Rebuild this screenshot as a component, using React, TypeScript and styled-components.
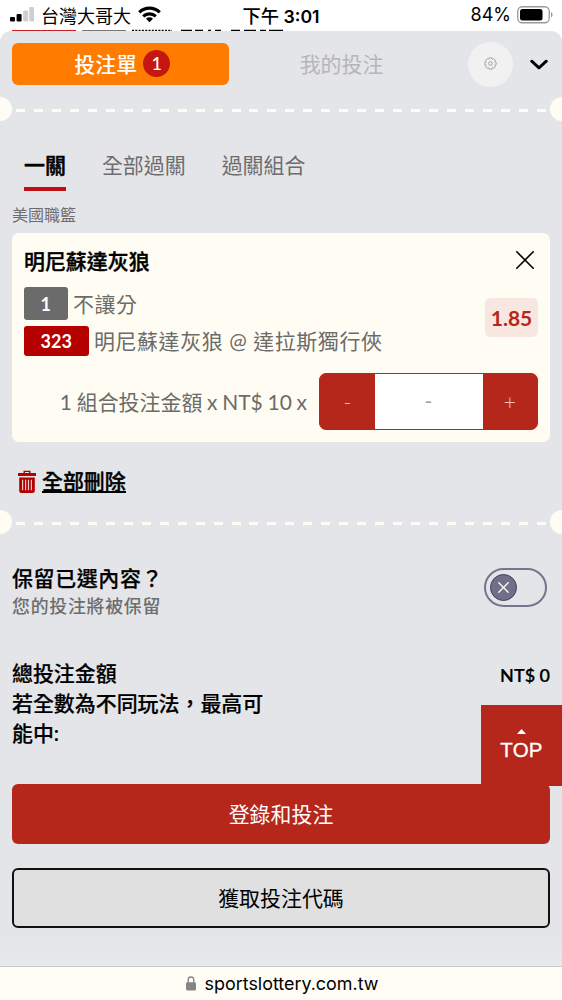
import React from 'react';
import styled, { createGlobalStyle } from 'styled-components';

const GlobalStyle = createGlobalStyle`
  * { box-sizing: border-box; }
  body { margin: 0; background: #fff; }
  button { font: inherit; color: inherit; margin: 0; padding: 0; border: 0; background: none; }
  svg { display: block; flex: none; }
`;

const Screen = styled.div`
  width: 562px;
  height: 1000px;
  display: flex;
  flex-direction: column;
  overflow: hidden;
  position: relative;
  background: #fff;
  font-family: Lato, "Noto Sans CJK TC", sans-serif;
  font-size: 20.95px;
  color: #000;
  white-space: nowrap;
`;

const StatusBar = styled.header`
  height: 31px;
  display: grid;
  grid-template-columns: 1fr auto 1fr;
  align-items: center;
  padding: 0 9px 2px 10px;
  position: relative;
  font-family: Inter, "Noto Sans CJK TC", sans-serif;
  font-size: 18px;
`;

const StatusGroup = styled.div<{ $end?: boolean }>`
  display: flex;
  align-items: center;
  gap: ${p => (p.$end ? '6px' : '7px')};
  justify-content: ${p => (p.$end ? 'flex-end' : 'flex-start')};
`;

const Clock = styled.div`
  font-weight: 600;
  font-size: 17.7px;
  padding-right: 1px;
`;

const ClockPeriod = styled.span`
  font-weight: 500;
  font-size: 18.3px;
`;

const PagePeek = styled.svg`
  position: absolute;
  left: 0;
  top: 29px;
`;

const Sheet = styled.main`
  height: 935px;
  background: linear-gradient(#e4e5e8 97%, #e8e9ec);
  border-radius: 11px 11px 0 0;
  display: flex;
  flex-direction: column;
  position: relative;
`;

const SheetHead = styled.div`
  height: 66px;
  padding: 0 14px 0 12px;
  display: flex;
  align-items: center;
`;

const SlipTab = styled.button`
  width: 216.5px;
  height: 42px;
  border-radius: 6px;
  background: #ff7c00;
  color: #fff;
  font-weight: 500;
  display: flex;
  align-items: center;
  justify-content: center;
  gap: 6px;
  padding: 0 0 2px 4px;
`;

const Count = styled.span`
  width: 27px;
  height: 27px;
  margin-top: 1px;
  border-radius: 50%;
  background: #c4170f;
  font-size: 18px;
  line-height: 27px;
  text-align: center;
`;

const MyBets = styled.button`
  width: 226px;
  padding-bottom: 2px;
  color: #b5b6b9;
`;

const GearButton = styled.button`
  width: 45px;
  height: 45px;
  margin: 0 17px 0 13.5px;
  border-radius: 50%;
  background: #f1f1f2;
  display: flex;
  align-items: center;
  justify-content: center;
  padding-bottom: 2px;
`;

const Perforation = styled.div`
  height: 24px;
  display: flex;
  align-items: center;
  justify-content: space-between;
  overflow: hidden;
`;

const Notch = styled.span<{ $right?: boolean }>`
  width: 12px;
  height: 24px;
  flex: none;
  background: #fffdf3;
  border-radius: ${p => (p.$right ? '12px 0 0 12px' : '0 12px 12px 0')};
`;

const Dashes = styled.span`
  width: 531px;
  height: 3px;
  margin-top: 3px;
  background: repeating-linear-gradient(90deg, #fffdf3 0 9px, transparent 9px 17.96px);
`;

const Tabs = styled.nav`
  display: flex;
  gap: 36px;
  height: 70px;
  padding: 22px 24px 0;
`;

const Tab = styled.button<{ $active?: boolean }>`
  height: 48px;
  line-height: 44px;
  padding-bottom: 3px;
  color: ${p => (p.$active ? '#000' : '#6d6d6f')};
  font-weight: ${p => (p.$active ? 500 : 400)};
  -webkit-text-stroke: ${p => (p.$active ? '0.5px' : '0')};
  border-bottom: 4px solid ${p => (p.$active ? '#be0f14' : 'transparent')};
`;

const League = styled.div`
  height: 42px;
  padding: 11px 12px 0;
  font-size: 16px;
  line-height: 25px;
  color: #6d6d6f;
`;

const BetCard = styled.article`
  height: 209px;
  margin: 0 12px;
  padding: 12px;
  border-radius: 7px;
  background: #fffdf3;
  color: #6b6b69;
`;

const CardTitle = styled.div`
  height: 30px;
  display: flex;
  align-items: center;
  justify-content: space-between;
  padding-right: 4px;
  color: #000;
  font-weight: 500;
  -webkit-text-stroke: 0.4px;
`;

const TitleText = styled.span`
  padding-bottom: 1px;
`;

const BetInfo = styled.div`
  display: flex;
  justify-content: space-between;
  align-items: flex-start;
  margin-top: 12px;
  height: 70px;
`;

const BetLines = styled.div`
  display: flex;
  flex-direction: column;
  gap: 6px;
  letter-spacing: 0.6px;
`;

const BetLine = styled.div<{ $h: number }>`
  display: flex;
  height: ${p => p.$h}px;
  align-items: center;
  gap: 5.5px;
`;

const BetName = styled.span`
  padding-bottom: 2px;
`;

const Tag = styled.span<{ $w: number; $red?: boolean }>`
  width: ${p => p.$w}px;
  height: 100%;
  display: flex;
  align-items: center;
  justify-content: center;
  border-radius: 3px;
  background: ${p => (p.$red ? '#b50000' : '#6b6b6b')};
  color: #fff;
  font-size: 18px;
  font-weight: 700;
  letter-spacing: 0;
`;

const Odds = styled.div`
  width: 53px;
  height: 39px;
  margin-top: 11px;
  border-radius: 5px;
  background: #f8e7e0;
  color: #b5261b;
  font-size: 21px;
  font-weight: 700;
  line-height: 39px;
  text-align: center;
`;

const StakeRow = styled.div`
  display: flex;
  justify-content: flex-end;
  align-items: center;
  gap: 12px;
  margin-top: 16px;
  height: 57px;
`;

const StakeLabel = styled.span`
  padding-bottom: 2px;
  word-spacing: -0.6px;
`;

const Stepper = styled.div`
  width: 219px;
  height: 57px;
  display: flex;
  border: 1.5px solid #b5261b;
  border-radius: 7px;
  background: #b5261b;
  overflow: hidden;
  line-height: 54px;
  text-align: center;
`;

const StepButton = styled.button`
  flex: 1;
  color: #f1c9c2;
  font-weight: 300;
`;

const StakeField = styled.div`
  width: 108px;
  background: #fff;
  color: #a0a0a0;
`;

const DeleteAll = styled.button`
  height: 68px;
  padding: 11px 18px 0;
  display: flex;
  align-items: center;
  gap: 6px;
  font-weight: 500;
  -webkit-text-stroke: 0.4px;
`;

const DeleteLabel = styled.span`
  line-height: 20px;
  border-bottom: 2px solid #000;
`;

const KeepRow = styled.section`
  height: 82px;
  margin-top: 29px;
  padding: 0 15px 0 12px;
  display: flex;
  justify-content: space-between;
`;

const KeepTitle = styled.div`
  line-height: 30px;
  font-weight: 500;
  letter-spacing: 0.65px;
  -webkit-text-stroke: 0.25px;
`;

const KeepNote = styled.div`
  line-height: 27px;
  font-size: 17.9px;
  font-weight: 500;
  letter-spacing: 0.75px;
  color: #6d6d6f;
`;

const Toggle = styled.button`
  width: 63px;
  height: 39px;
  margin-top: 5px;
  padding-left: 4px;
  border: 2px solid #77748f;
  border-radius: 20px;
  display: flex;
  align-items: center;
`;

const Knob = styled.span`
  width: 27px;
  height: 27px;
  border-radius: 50%;
  border: 1.5px solid #403d66;
  background: #706f89;
  display: flex;
  align-items: center;
  justify-content: center;
`;

const Totals = styled.section`
  height: 139px;
  padding: 13px 12px 0;
  display: flex;
  justify-content: space-between;
  font-weight: 500;
  line-height: 30px;
  -webkit-text-stroke: 0.2px;
`;

const TotalLabel = styled.div`
  width: 262px;
  white-space: normal;
`;

const TotalValue = styled.div`
  font-size: 18px;
  font-weight: 600;
  padding-top: 2px;
`;

const Action = styled.button<{ $outline?: boolean }>`
  height: 60px;
  margin: 0 12px 24px;
  padding-bottom: 2px;
  border-radius: 6px;
  border: ${p => (p.$outline ? '2px solid #111' : '0')};
  background: ${p => (p.$outline ? '#e0e0e0' : '#b5261b')};
  color: ${p => (p.$outline ? '#000' : '#fff')};
`;

const TopButton = styled.button`
  position: absolute;
  right: 0;
  top: 705px;
  width: 81px;
  height: 81px;
  padding-top: 24px;
  background: #b5261b;
  color: #fff;
  font: 20.5px/26px "Liberation Sans", sans-serif;
  letter-spacing: 0.2px;
  -webkit-text-stroke: 0.3px;
  display: flex;
  flex-direction: column;
  align-items: center;
  gap: 3px;
`;

const AddressBar = styled.footer`
  height: 34px;
  border-top: 1px solid #c9c9c9;
  background: #fffdf6;
  display: flex;
  align-items: center;
  justify-content: center;
  gap: 9px;
  padding-left: 2px;
  font: 17.9px Inter, sans-serif;
`;

function Separator() {
  return (
    <Perforation>
      <Notch />
      <Dashes />
      <Notch $right />
    </Perforation>
  );
}

export default function App() {
  return (
    <Screen>
      <GlobalStyle />
      <StatusBar>
        <StatusGroup>
          <svg width="24" height="15" viewBox="0 0 24 15">
            <rect x="0" y="10" width="5" height="4.5" rx="1" />
            <rect x="6.6" y="7" width="5" height="7.5" rx="1" />
            <rect x="13.2" y="3.5" width="5" height="11" rx="1" fill="#cfcfcf" />
            <rect x="19.3" y="0" width="4.7" height="14.5" rx="1" fill="#cfcfcf" />
          </svg>
          <span>台灣大哥大</span>
          <svg width="23" height="17" viewBox="0 0 23 17" fill="none" stroke="#000" strokeWidth="3.2">
            <path d="M1.3 6.3a14.5 14.5 0 0 1 20.4 0" />
            <path d="M5.2 10.4a9 9 0 0 1 12.6 0" />
            <path d="M11.5 16.2 8 12.7a5 5 0 0 1 7 0z" fill="#000" stroke="none" />
          </svg>
        </StatusGroup>
        <Clock><ClockPeriod>下午</ClockPeriod> 3:01</Clock>
        <StatusGroup $end>
          <span>84%</span>
          <svg width="36" height="18" viewBox="0 0 36 18">
            <rect x=".75" y=".75" width="31.5" height="16" rx="4.5" fill="#fff" stroke="#999" strokeWidth="1.3" />
            <rect x="3" y="3" width="22.5" height="11.5" rx="2.5" />
            <path d="M34 6v5.5q1.6-.8 1.6-2.75T34 6z" fill="#999" />
          </svg>
        </StatusGroup>
        <PagePeek width="300" height="3" viewBox="0 0 300 3">
          <path d="M12 1.7h64" stroke="#c4202a" strokeWidth="1.3" />
          <path d="M82 1.7h44" stroke="#777" strokeWidth="1.3" />
          <path d="M132 1.5h40" stroke="#000" strokeWidth="1.6" strokeDasharray="2 1.3" />
          <path d="M181 1.5h11m3 0h8m5 0h3m4 0h6m10 0h9m4 0h12m4 0h6m3 0h14" stroke="#000" strokeWidth="1.5" />
        </PagePeek>
      </StatusBar>

      <Sheet>
        <SheetHead>
          <SlipTab>投注單<Count>1</Count></SlipTab>
          <MyBets>我的投注</MyBets>
          <GearButton aria-label="設定">
            <svg width="13" height="13" viewBox="0 0 13 13" fill="none" stroke="#a3a3a3">
              <path d="M5.3.8h2.4l.5 1.4 1.5-.6 1.7 1.7-.6 1.5 1.4.5v2.4l-1.4.5.6 1.5-1.7 1.7-1.5-.6-.5 1.4H5.3l-.5-1.4-1.5.6-1.7-1.7.6-1.5-1.4-.5V5.3l1.4-.5-.6-1.5 1.7-1.7 1.5.6z" strokeLinejoin="round" />
              <circle cx="6.5" cy="6.5" r="1.8" />
            </svg>
          </GearButton>
          <svg width="18" height="12" viewBox="0 0 18 12" fill="none" stroke="#000" strokeWidth="2.9" strokeLinecap="round" strokeLinejoin="round">
            <path d="M1.7 3.2 9 9.8l7.3-6.6" />
          </svg>
        </SheetHead>
        <Separator />

        <Tabs>
          <Tab $active>一關</Tab>
          <Tab>全部過關</Tab>
          <Tab>過關組合</Tab>
        </Tabs>
        <League>美國職籃</League>

        <BetCard>
          <CardTitle>
            <TitleText>明尼蘇達灰狼</TitleText>
            <svg width="18" height="18" viewBox="0 0 18 18" stroke="#000" strokeWidth="1.6" strokeLinecap="round">
              <path d="m.8.8 16.4 16.4m0-16.4L.8 17.2" />
            </svg>
          </CardTitle>
          <BetInfo>
            <BetLines>
              <BetLine $h={33}><Tag $w={43.5}>1</Tag><BetName>不讓分</BetName></BetLine>
              <BetLine $h={30}><Tag $w={64.5} $red>323</Tag><BetName>明尼蘇達灰狼 @ 達拉斯獨行俠</BetName></BetLine>
            </BetLines>
            <Odds>1.85</Odds>
          </BetInfo>
          <StakeRow>
            <StakeLabel>1 組合投注金額 x NT$ 10 x</StakeLabel>
            <Stepper>
              <StepButton>-</StepButton>
              <StakeField>-</StakeField>
              <StepButton>+</StepButton>
            </Stepper>
          </StakeRow>
        </BetCard>

        <DeleteAll>
          <svg width="18" height="23" viewBox="0 0 18 23">
            <path d="M5.5 3V.8h7V3H18v3H0V3zM7 3h4v-.9H7z" fill="#b50000" fillRule="evenodd" />
            <path d="M1.2 7.4h15.6V21a2 2 0 0 1-2 2H3.2a2 2 0 0 1-2-2z" fill="#b50000" />
            <path d="M4.6 9.8v10.4M7.6 9.8v10.4M10.5 9.8v10.4M13.4 9.8v10.4" stroke="#e9c8ca" strokeWidth="1.2" />
          </svg>
          <DeleteLabel>全部刪除</DeleteLabel>
        </DeleteAll>
        <Separator />

        <KeepRow>
          <div>
            <KeepTitle>保留已選內容？</KeepTitle>
            <KeepNote>您的投注將被保留</KeepNote>
          </div>
          <Toggle aria-label="保留已選內容">
            <Knob>
              <svg width="11" height="11" viewBox="0 0 11 11" stroke="#fff" strokeWidth="1.3" strokeLinecap="round">
                <path d="m.8.8 9.4 9.4m0-9.4L.8 10.2" />
              </svg>
            </Knob>
          </Toggle>
        </KeepRow>

        <Totals>
          <TotalLabel>總投注金額<br />若全數為不同玩法，最高可能中:</TotalLabel>
          <TotalValue>NT$ 0</TotalValue>
        </Totals>
        <Action>登錄和投注</Action>
        <Action $outline>獲取投注代碼</Action>
      </Sheet>

      <AddressBar>
        <svg width="10" height="15" viewBox="0 0 10 15">
          <path d="M2.2 7V3.8a2.8 2.8 0 0 1 5.6 0V7" fill="none" stroke="#858585" strokeWidth="1.3" />
          <rect x="0" y="6.3" width="10" height="8.2" rx="1.4" fill="#858585" />
        </svg>
        sportslottery.com.tw
      </AddressBar>

      <TopButton>
        <svg width="9" height="5" viewBox="0 0 9 5"><path d="M4.5 0 9 5H0z" fill="#fff" /></svg>
        TOP
      </TopButton>
    </Screen>
  );
}
